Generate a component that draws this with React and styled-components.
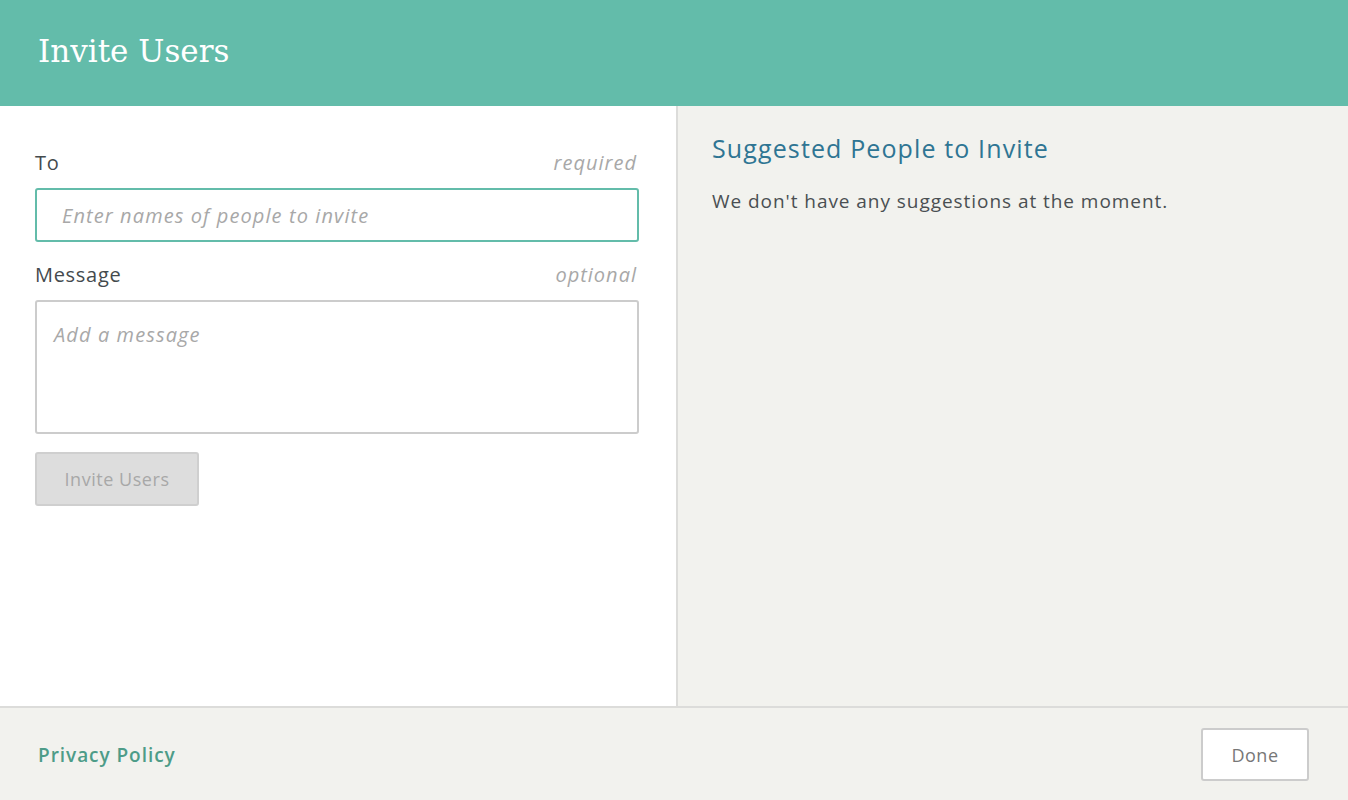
import React from 'react';
import styled, { createGlobalStyle } from 'styled-components';

const GlobalStyle = createGlobalStyle`
  html, body {
    margin: 0;
    padding: 0;
    height: 100%;
  }
  body {
    font-family: "Open Sans", "Liberation Sans", sans-serif;
    background: #f2f2ee;
  }
  * {
    box-sizing: border-box;
  }
`

const Page = styled.div`
  width: 100%;
  height: 800px;
  display: flex;
  flex-direction: column;
  overflow: hidden;
`

const Header = styled.header`
  height: 106px;
  flex-shrink: 0;
  background: #63bcaa;
  display: flex;
  align-items: center;
  padding: 0 38px;
`

const Title = styled.h1`
  margin: 0 0 5px;
  font-family: "DejaVu Serif", "Liberation Serif", serif;
  font-weight: normal;
  font-size: 31px;
  color: #ffffff;
`

const Main = styled.main`
  flex: 1;
  display: flex;
  min-height: 0;
`

const FormPanel = styled.section`
  width: 678px;
  flex-shrink: 0;
  background: #ffffff;
  border-right: 2px solid #dcdcda;
  padding: 45px 37px 0 35px;
  display: flex;
  flex-direction: column;
`

const LabelRow = styled.div`
  display: flex;
  justify-content: space-between;
  align-items: baseline;
  margin-bottom: 13px;
  font-size: 20px;
  line-height: 24px;
`

const Label = styled.label`
  color: #444a4d;
  letter-spacing: 0.035em;
`

const Hint = styled.span`
  color: #a8a8a8;
  font-style: italic;
  letter-spacing: 0.05em;
  padding-right: 2px;
`

const TextInput = styled.input`
  width: 100%;
  height: 54px;
  border: 2px solid ${props => props.active ? '#63bcaa' : '#cccccc'};
  border-radius: 3px;
  padding: 0 25px;
  font-family: inherit;
  font-size: 20px;
  font-style: italic;
  letter-spacing: 0.055em;
  color: #444;
  outline: none;
  margin-bottom: 21px;
  &::placeholder {
    color: #a8a8a8;
  }
`

const TextArea = styled.textarea`
  width: 100%;
  height: 134px;
  border: 2px solid #cccccc;
  border-radius: 3px;
  padding: 19px 17px;
  font-family: inherit;
  font-size: 20px;
  font-style: italic;
  letter-spacing: 0.055em;
  resize: none;
  outline: none;
  margin-bottom: 18px;
  &::placeholder {
    color: #a8a8a8;
  }
`

const Button = styled.button`
  font-family: inherit;
  font-size: 18px;
  letter-spacing: 0.03em;
  border-radius: 3px;
  cursor: pointer;
  background: ${props => props.disabled ? '#dddddd' : '#ffffff'};
  color: ${props => props.disabled ? '#a8a8a8' : '#777777'};
  border: 2px solid ${props => props.disabled ? '#cfcfcf' : '#cccccc'};
  height: ${props => props.h || 54}px;
  padding: 0 ${props => props.px || 27}px;
`

const InviteButton = styled(Button)`
  align-self: flex-start;
  width: 164px;
  padding: 0;
`

const SuggestPanel = styled.section`
  flex: 1;
  background: #f2f2ee;
  padding: 25px 34px;
`

const SuggestTitle = styled.h2`
  margin: 0 0 24px;
  font-weight: normal;
  font-size: 25px;
  line-height: 34px;
  letter-spacing: 0.045em;
  color: #2f7593;
`

const SuggestText = styled.p`
  margin: 0;
  font-size: 19px;
  line-height: 25px;
  letter-spacing: 0.05em;
  color: #4a4f52;
`

const Footer = styled.footer`
  height: 94px;
  flex-shrink: 0;
  border-top: 2px solid #dcdcda;
  background: #f2f2ee;
  display: flex;
  align-items: center;
  justify-content: space-between;
  padding: 0 39px 0 38px;
`

const FooterLink = styled.a`
  color: #4d9c88;
  font-size: 19px;
  font-weight: 600;
  letter-spacing: 0.05em;
  text-decoration: none;
  margin-top: 2px;
`

const DoneButton = styled(Button)`
  width: 108px;
  padding: 0;
  margin-top: 1px;
`

export default function App() {
  return (
    <>
      <GlobalStyle />
      <Page>
        <Header>
          <Title>Invite Users</Title>
        </Header>
        <Main>
          <FormPanel>
            <LabelRow>
              <Label>To</Label>
              <Hint>required</Hint>
            </LabelRow>
            <TextInput active placeholder="Enter names of people to invite" />
            <LabelRow>
              <Label>Message</Label>
              <Hint>optional</Hint>
            </LabelRow>
            <TextArea placeholder="Add a message" />
            <InviteButton disabled>Invite Users</InviteButton>
          </FormPanel>
          <SuggestPanel>
            <SuggestTitle>Suggested People to Invite</SuggestTitle>
            <SuggestText>We don't have any suggestions at the moment.</SuggestText>
          </SuggestPanel>
        </Main>
        <Footer>
          <FooterLink href="#">Privacy Policy</FooterLink>
          <DoneButton h={53}>Done</DoneButton>
        </Footer>
      </Page>
    </>
  );
}
